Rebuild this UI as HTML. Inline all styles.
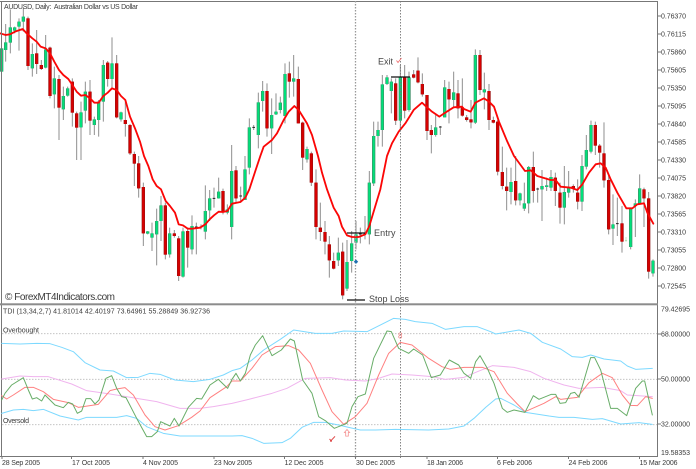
<!DOCTYPE html>
<html><head><meta charset="utf-8"><style>
html,body{margin:0;padding:0;background:#fff}
svg{display:block;position:absolute;left:0;top:0;filter:blur(0.35px)}
text{font-family:"Liberation Sans",sans-serif;font-size:7px;fill:#3a3a3a}
.c{fill:none}
.w{stroke:#8f8f8f;stroke-width:3;fill:none}
.d{stroke:#222;stroke-width:3;fill:none}
polyline{fill:none;stroke-linejoin:round;stroke-linecap:round}
</style></head><body>
<svg width="696" height="469" viewBox="0 0 696 469" xmlns="http://www.w3.org/2000/svg">
<rect width="696" height="469" fill="#fff"/>
<g transform="scale(0.33333)" class="c">
<defs>
<path id="g0" d="M5 145V215M17 127V150M31 82V128M44 82V92M57 65V80M70 50V65M97 162V205M137 148V203M163 235V283M190 288V328M203 265V287M243 337V382M256 275V332M283 358V375M296 305V360M310 195V305M336 190V237M363 337V358M443 694V701M456 700V713M470 663V703M483 616V663M509 700V763M549 694V830M576 678V748M616 633V695M629 595V631M656 575V595M682 628V638M695 513V681"/>
<path id="r0" d="M84 55V198M110 160V192M124 195V207M150 143V288M177 237V323M217 245V338M230 340V383M270 275V362M323 188V237M350 190V352M376 360V372M390 375V460M403 462V491M416 490V565M430 561V700M496 616V764M523 700V708M536 715V828M563 693V743M669 573V636"/>
<path id="g1" d="M39 508V600M52 382V503M79 307V405M92 273V303M119 345V385M132 335V343M145 308V330M159 222V348M185 235V245M225 447V478M319 758V781M345 786V866M359 730V783M372 703V728M412 548V703M425 408V550M438 390V408M451 253V390M465 232V252M478 245V273M505 232V362M531 232V330M611 382V405M638 262V352M665 277V300"/>
<path id="r1" d="M12 511V595M105 273V385M172 220V245M199 237V370M212 368V473M238 460V548M252 548V681M265 683V696M279 696V725M292 733V781M305 783V806M332 755V886M491 250V362M518 232V332M545 223V233M558 212V247M571 252V283M585 285V393M598 390V405M651 267V298M678 280V325M691 322V347"/>
<path id="g2" d="M34 165V368M61 268V277M141 546V576M168 580V601M181 610V626M194 501V610M234 558V568M248 556V561M261 531V563M301 576V623M314 563V578M354 498V605M367 450V500M381 375V455M447 673V686M500 625V741M514 610V618M527 565V611M567 782V820"/>
<path id="r2" d="M8 352V360M21 358V367M48 165V270M75 273V360M88 360V368M101 365V515M115 516V558M128 560V573M155 543V601M208 501V573M274 533V573M288 578V623M328 558V566M341 578V605M394 375V437M407 437V458M420 460V541M434 540V688M474 670V725M540 568V595M554 595V815"/>
</defs>
<g>
<path class="w" d="M5 145V215M17 72V185M31 28V160M44 80V100M57 55V152M70 22V95M84 50V210M97 130V230M110 90V222M124 180V210M137 105V205M150 140V295M163 200V325M177 225V420M190 260V360M203 260V290M217 235V380M230 335V480M243 305V480M256 245V370M270 240V405M283 350V405M296 300V410M310 180V365M323 183V260M336 112V265M350 165V355M363 335V365M376 305V410M390 372V465M403 455V558M416 468V593M430 548V738M443 693V703M456 668V753M470 626V796M483 588V723M496 608V778M509 683V773M523 690V713M536 708V843M549 683V833M563 683V803M576 646V763M589 668V763M603 673V688M616 556V718M629 570V663M642 563V623M656 533V596M669 566V643M682 613V643M695 435V718"/>
<use href="#g0" stroke="#3f8f68" stroke-width="10"/><use href="#g0" stroke="#00e07a" stroke-width="6"/>
<use href="#r0" stroke="#8a1414" stroke-width="10"/><use href="#r0" stroke="#d60000" stroke-width="7"/>
<path class="d" d="M585 681H593M599 681H607M638 595H646"/>
</g>
<g transform="translate(696,0)">
<path class="w" d="M12 498V608M26 560V608M39 468V600M52 355V523M65 375V390M79 278V445M92 243V335M105 250V410M119 295V462M132 280V345M145 290V340M159 190V370M172 185V293M185 165V290M199 200V360M212 365V510M225 440V488M238 455V558M252 508V718M265 608V723M279 663V763M292 708V833M305 758V808M319 713V798M332 728V898M345 720V873M359 693V818M372 663V748M385 683V730M399 648V718M412 513V733M425 365V558M438 365V440M451 225V440M465 225V255M478 235V340M491 235V375M505 195V395M518 195V355M531 215V335M545 210V235M558 172V250M571 220V290M585 285V420M598 375V460M611 345V410M625 378V405M638 240V350M651 245V370M665 215V320M678 240V355M691 235V350"/>
<use href="#g1" stroke="#3f8f68" stroke-width="10"/><use href="#g1" stroke="#00e07a" stroke-width="6"/>
<use href="#r1" stroke="#8a1414" stroke-width="10"/><use href="#r1" stroke="#d60000" stroke-width="7"/>
<path class="d" d="M22 588H30M61 382H69M381 702H389M395 700H403M621 381H629"/>
</g>
<g transform="translate(1392,0)">
<path class="w" d="M8 345V365M21 300V385M34 148V372M48 150V285M61 218V328M75 252V390M88 350V370M101 360V526M115 440V568M128 503V631M141 503V613M155 468V616M168 578V616M181 548V633M194 498V640M208 455V608M221 563V608M234 510V663M248 533V573M261 510V573M274 518V618M288 548V671M301 498V673M314 513V593M328 553V578M341 538V628M354 465V633M367 405V508M381 362V460M394 365V465M407 432V503M420 367V563M434 528V703M447 583V735M460 593V708M474 618V758M500 623V748M514 598V711M527 523V613M540 563V681M554 576V836M567 778V830"/>
<use href="#g2" stroke="#3f8f68" stroke-width="10"/><use href="#g2" stroke="#00e07a" stroke-width="6"/>
<use href="#r2" stroke="#8a1414" stroke-width="10"/><use href="#r2" stroke="#d60000" stroke-width="7"/>
<path class="d" d="M217 567H225M456 671H464"/>
</g>
<polyline stroke="#fb0606" stroke-width="5.5" points="0,100 17,105 30,103 45,95 68,87 80,100 97,115 110,125 122,140 137,145 150,160 163,185 177,210 190,225 205,237 217,255 230,275 243,287 256,285 270,295 283,308 296,308 310,288 323,278 336,265 350,270 363,288 376,300 390,350 405,385 420,425 432,468 445,498 458,538 470,558 483,568 497,603 510,618 525,638 536,673 549,676 563,686 576,686 600,683 616,673 629,658 642,646 656,635 669,636 682,633 696,611 721,606 736,593 748,568 766,513 781,468 791,440 816,420 831,400 851,360 866,335 883,318 896,330 921,370 936,405 954,468 966,518 981,568 1001,623 1016,648 1026,680 1041,706 1056,711 1076,711 1096,703 1108,678 1126,618 1141,568 1161,468 1176,430 1196,395 1216,370 1241,330 1266,308 1279,320 1296,335 1318,350 1336,338 1361,322 1386,320 1392,327 1412,335 1426,308 1452,295 1467,305 1482,320 1497,365 1522,425 1542,468 1575,513 1592,511 1612,528 1652,540 1667,540 1682,560 1712,563 1732,570 1747,553 1767,518 1787,493 1802,490 1817,503 1832,538 1852,578 1879,625 1897,625 1912,613 1932,610 1942,638 1960,671"/>
</g>
<!-- frame -->
<path d="M1.5 1V456M0 1.5H658M657.5 1V456M0 456.5H658" stroke="#777" stroke-width="1" fill="none"/>
<rect x="0" y="303.3" width="658" height="2" fill="#8c8c8c"/>
<path d="M355.5 1V458" stroke="#999" stroke-width="1.3" stroke-dasharray="1.5 1.5" fill="none"/>
<path d="M400.5 1V458" stroke="#777" stroke-width="0.9" stroke-dasharray="1.5 1.5" fill="none"/>
<!-- upper axis -->
<path d="M658 16h3M658 34h3M658 52h3M658 70h3M658 88h3M658 106h3M658 124h3M658 142h3M658 160h3M658 178h3M658 196h3M658 214h3M658 232h3M658 250h3M658 268h3M658 286h3M658 334h3M658 379h3M658 424h3M71.5 456v3M143 456v3M214 456v3M284.5 456v3M355.5 456v3M427 456v3M497.5 456v3M568.5 456v3M639.5 456v3M2 456v3" stroke="#777" fill="none"/>
<g>
<text x="661" y="18.5" textLength="25">0.76370</text>
<text x="661" y="36.5" textLength="25">0.76115</text>
<text x="661" y="54.5" textLength="25">0.75860</text>
<text x="661" y="72.5" textLength="25">0.75605</text>
<text x="661" y="90.5" textLength="25">0.75350</text>
<text x="661" y="108.5" textLength="25">0.75095</text>
<text x="661" y="126.5" textLength="25">0.74840</text>
<text x="661" y="144.5" textLength="25">0.74585</text>
<text x="661" y="162.5" textLength="25">0.74330</text>
<text x="661" y="180.5" textLength="25">0.74075</text>
<text x="661" y="198.5" textLength="25">0.73820</text>
<text x="661" y="216.5" textLength="25">0.73565</text>
<text x="661" y="234.5" textLength="25">0.73310</text>
<text x="661" y="252.5" textLength="25">0.73055</text>
<text x="661" y="270.5" textLength="25">0.72800</text>
<text x="661" y="288.5" textLength="25">0.72545</text>
<text x="661" y="311.5" textLength="29">79.42695</text>
<text x="661" y="336.5" textLength="29">68.00000</text>
<text x="661" y="381.5" textLength="29">50.00000</text>
<text x="661" y="426.5" textLength="29">32.00000</text>
<text x="661" y="455" textLength="29">19.58353</text>
</g>
<text x="4" y="9" textLength="134" xml:space="preserve">AUDUSD, Daily:  Australian Dollar vs US Dollar</text>
<text x="5" y="300" style="font-size:10px" textLength="110">© ForexMT4Indicators.com</text>
<text x="378" y="64.5" style="font-size:9px;fill:#444" textLength="15">Exit</text>
<text x="374" y="236" style="font-size:9px;fill:#444" textLength="21.5">Entry</text>
<text x="369" y="302" style="font-size:9px;fill:#444" textLength="40">Stop Loss</text>
<text x="3" y="313.5" textLength="207">TDI (13,34,2,7) 41.81014 42.40197 73.64961 55.28849 36.92736</text>
<text x="3" y="332.5" textLength="36">Overbought</text>
<text x="3" y="423" textLength="26">Oversold</text>
<g>
<text x="2" y="465" textLength="38">28 Sep 2005</text>
<text x="72" y="465" textLength="38">17 Oct 2005</text>
<text x="143" y="465" textLength="35">4 Nov 2005</text>
<text x="214" y="465" textLength="38">23 Nov 2005</text>
<text x="284.5" y="465" textLength="39">12 Dec 2005</text>
<text x="356" y="465" textLength="39">30 Dec 2005</text>
<text x="427" y="465" textLength="36">18 Jan 2006</text>
<text x="497" y="465" textLength="35">6 Feb 2006</text>
<text x="568.5" y="465" textLength="39">24 Feb 2006</text>
<text x="639.5" y="465" textLength="38">15 Mar 2006</text>
</g>
<!-- markers -->
<path d="M347 233H365M391 77H410M347 300H365" stroke="#111" stroke-width="1.2" fill="none"/>
<path d="M356 259.5l2.2 2.2-2.2 2.2-2.2-2.2z" fill="#1e6fb0"/>
<path d="M396.5 60.5l1.5 2 3.5-4.5" stroke="#f07070" stroke-width="0.9" fill="none"/>
<path d="M626 237v4m-1 -1l1 1.5 1-1.5" stroke="#8fce8f" stroke-width="0.5" fill="none"/>
<!-- lower -->
<path d="M2 333.7H657M2 379.3H657M2 424.7H657" stroke="#bbb" stroke-width="0.8" stroke-dasharray="1.5 1.5" fill="none"/>
<g transform="translate(0,300) scale(0.33333)">
<polyline stroke="#7dd9ff" stroke-width="3" points="5,130 60,132 110,130 150,131 185,142 220,155 255,188 300,210 340,213 380,233 415,232 450,220 480,223 525,240 580,245 630,238 670,225 696,212 721,205 756,180 791,150 841,118 881,90 946,100 996,100 1031,93 1101,95 1131,80 1181,55 1216,58 1246,65 1296,70 1336,88 1392,80 1432,80 1472,95 1487,102 1557,90 1592,100 1627,127 1682,147 1717,170 1747,172 1772,165 1812,177 1862,183 1882,198 1907,208 1957,205"/>
<polyline stroke="#7dd9ff" stroke-width="3" points="5,340 40,330 70,328 100,332 130,328 180,348 235,360 260,352 300,352 350,352 380,347 410,355 440,380 490,400 540,408 600,408 650,408 696,408 726,407 756,415 791,430 846,428 871,415 906,382 941,367 976,367 1016,375 1046,382 1081,390 1126,390 1186,388 1286,390 1346,387 1392,378 1422,355 1457,322 1487,297 1502,295 1542,315 1577,337 1647,348 1677,352 1722,352 1777,358 1807,356 1862,372 1917,368 1957,373"/>
<polyline stroke="#f0b4ee" stroke-width="3" points="5,237 60,228 100,230 145,230 215,252 260,272 330,282 410,295 470,305 540,325 600,325 640,320 696,310 746,298 816,280 861,265 916,235 991,233 1036,240 1096,243 1136,235 1176,222 1236,225 1296,230 1336,238 1392,232 1432,215 1477,197 1542,202 1592,215 1632,235 1692,255 1737,265 1807,262 1862,272 1882,285 1957,290"/>
<polyline stroke="#ff8080" stroke-width="3" points="5,287 20,297 40,285 75,262 100,262 130,275 160,298 205,308 235,322 295,313 330,272 350,267 375,263 400,285 435,345 465,380 495,390 535,377 575,352 600,333 630,293 680,260 696,243 721,243 756,205 786,165 826,140 866,137 896,150 931,190 966,270 996,335 1031,373 1066,350 1101,310 1136,225 1166,160 1201,127 1236,135 1286,175 1326,200 1351,208 1392,202 1447,202 1482,215 1522,280 1552,312 1575,335 1632,310 1667,290 1682,298 1732,292 1767,248 1807,220 1837,233 1867,285 1892,316 1912,317 1937,290 1957,295"/>
<polyline stroke="#68ad68" stroke-width="3" points="5,300 15,280 35,255 70,233 85,270 97,297 110,293 125,303 135,285 165,315 190,323 205,307 218,312 232,340 245,333 258,296 272,296 285,312 297,300 318,235 335,227 350,265 365,290 378,293 410,355 440,410 455,410 472,395 482,365 510,378 523,355 537,378 565,322 590,295 605,297 630,255 655,238 683,265 696,238 708,220 721,243 736,220 751,165 766,135 788,107 816,167 844,150 871,117 883,123 908,240 936,280 956,350 976,362 1003,385 1041,370 1056,320 1074,290 1096,282 1121,175 1161,93 1174,95 1196,145 1226,160 1241,147 1268,165 1294,233 1321,225 1348,180 1376,195 1392,220 1412,235 1427,185 1440,167 1462,205 1482,250 1507,325 1522,337 1542,330 1575,337 1600,287 1617,298 1654,283 1667,283 1680,310 1697,308 1712,280 1724,277 1737,292 1772,173 1784,173 1802,210 1832,325 1852,325 1880,347 1907,265 1927,243 1934,243 1957,345"/>
</g>
<path d="M329.5 439l1.5 1.6 4-4.2" stroke="#e05050" stroke-width="1" fill="none"/><circle cx="331" cy="441" r="0.9" fill="#d83030"/>
<path d="M347 429.5l2.6 3h-1.3v3.6h-2.6v-3.6h-1.3z" stroke="#f59090" stroke-width="0.8" fill="#fff"/>
<text x="398" y="338.5" style="font-size:8px;fill:#f08080">8</text>
</svg>
</body></html>
